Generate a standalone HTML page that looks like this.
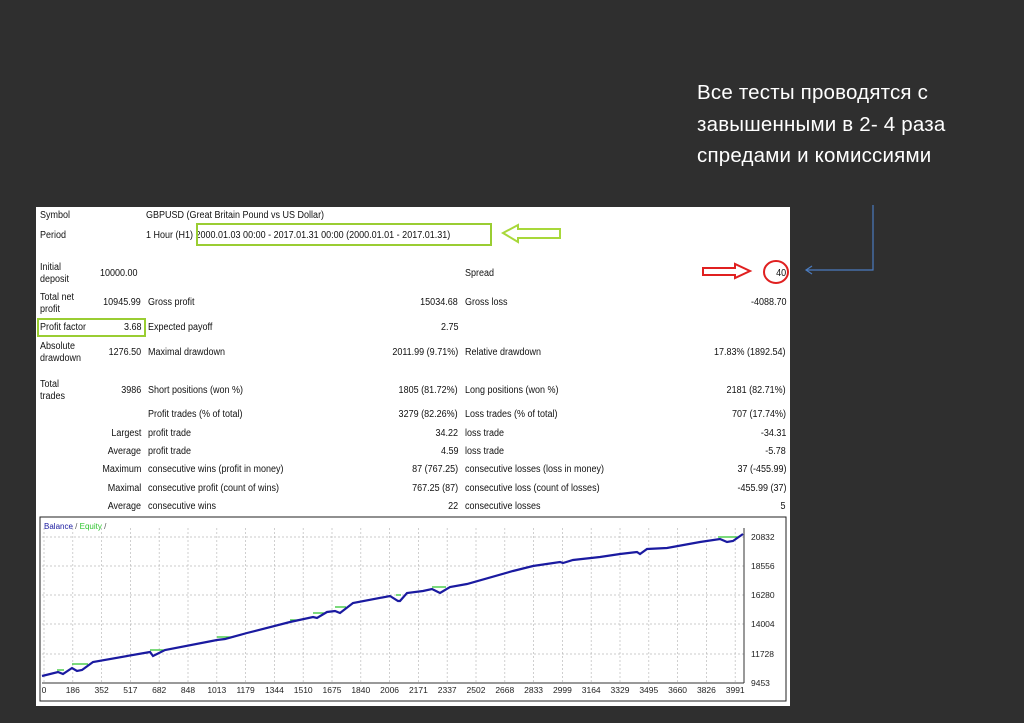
<!DOCTYPE html>
<html><head><meta charset="utf-8"><style>
body{margin:0;width:1024px;height:723px;background:#2f2f2f;position:relative;overflow:hidden;font-family:"Liberation Sans",sans-serif}
.title{position:absolute;left:697px;top:77px;color:#fff;font-size:20.5px;line-height:31.5px;letter-spacing:0.2px}
.panel{position:absolute;left:36px;top:207px;width:754px;height:499px;background:#fff}
.t{position:absolute;font-size:10px;color:#111;white-space:nowrap;line-height:11px;transform:scaleX(0.9);transform-origin:left center}
.r{transform-origin:right center;text-align:right}
</style></head><body>
<div class="title">Все тесты проводятся с<br>завышенными в 2- 4 раза<br>спредами и комиссиями</div>
<div class="panel"></div>
<div id="txt"></div>
<svg width="1024" height="723" style="position:absolute;left:0;top:0">
<rect x="197" y="224" width="294" height="21" fill="none" stroke="#9acd32" stroke-width="2"/>
<rect x="38" y="319" width="107" height="17" fill="none" stroke="#9acd32" stroke-width="2"/>
<path d="M503 233 L518 225 L518 229 L560 229 L560 238 L518 238 L518 242 Z" fill="none" stroke="#a8d83a" stroke-width="2"/>
<path d="M703 268 L735 268 L735 264 L750 271 L735 278 L735 275 L703 275 Z" fill="none" stroke="#e02020" stroke-width="2"/>
<ellipse cx="776" cy="272" rx="12" ry="11" fill="none" stroke="#e02020" stroke-width="2"/>
<path d="M873 205 V270 H806" fill="none" stroke="#4a7bbf" stroke-width="1.2"/>
<path d="M812 266 L806 270 L812 274" fill="none" stroke="#4a7bbf" stroke-width="1.2"/>
<rect x="40" y="517" width="746" height="184" fill="#fff" stroke="#222" stroke-width="1"/>
<g id="grid" stroke="#bbb" stroke-dasharray="2,2" stroke-width="0.7"></g>
<line x1="42" y1="683" x2="744" y2="683" stroke="#333"/>
<line x1="744" y1="528" x2="744" y2="683" stroke="#333"/>
<g stroke="#2ec42e" stroke-width="1.3" fill="none">
<path d="M57 670H64M72 664H88M150 650H166M217 637H234M290 620H298M313 613H324M335 607H346M396 595H401M432 587H446M718 537H738"/>
</g>
<polyline fill="none" stroke="#1a1aa0" stroke-width="2.2" points="42,676 58,672 63,674 72,668 77,671 82,670 93,662 150,652 153,656 165,650 217,640 225,639 247,633 290,622 313,617 317,618 327,612 335,611 340,613 353,603 390,596 398,601 400,601 407,593 423,591 432,589 440,593 450,587 467,584 513,571 533,566 560,562 563,563 573,560 600,557 620,554 637,552 640,554 647,549 667,548 700,542 720,539 727,542 733,541 743,534"/>
<text x="44" y="529" font-size="8" fill="#1a1aa0" font-family="Liberation Sans">Balance <tspan fill="#555">/</tspan> <tspan fill="#2ec42e">Equity</tspan> <tspan fill="#555">/</tspan></text>
<g id="lab" font-size="8.5" fill="#222" font-family="Liberation Sans"></g>
</svg>
<script>
var rows=[
[40,215,"Symbol"],[146,215,"GBPUSD (Great Britain Pound vs US Dollar)"],
[40,235,"Period"],[146,235,"1 Hour (H1) 2000.01.03 00:00 - 2017.01.31 00:00 (2000.01.01 - 2017.01.31)"],
[40,267,"Initial"],[40,279,"deposit"],[100,273,"10000.00"],[465,273,"Spread"],
[40,297,"Total net"],[40,309,"profit"],[148,302,"Gross profit"],[465,302,"Gross loss"],
[40,327,"Profit factor"],[148,327,"Expected payoff"],
[40,346,"Absolute"],[40,358,"drawdown"],[148,352,"Maximal drawdown"],[465,352,"Relative drawdown"],
[40,384,"Total"],[40,396,"trades"],[148,390,"Short positions (won %)"],[465,390,"Long positions (won %)"],
[148,414,"Profit trades (% of total)"],[465,414,"Loss trades (% of total)"],
[148,433,"profit trade"],[465,433,"loss trade"],[148,451,"profit trade"],[465,451,"loss trade"],
[148,469,"consecutive wins (profit in money)"],[465,469,"consecutive losses (loss in money)"],
[148,488,"consecutive profit (count of wins)"],[465,488,"consecutive loss (count of losses)"],
[148,506,"consecutive wins"],[465,506,"consecutive losses"]];
var rr=[[141,302,"10945.99"],[141,327,"3.68"],[141,352,"1276.50"],[141,390,"3986"],[141,433,"Largest"],[141,451,"Average"],[141,469,"Maximum"],[141,488,"Maximal"],[141,506,"Average"],
[458,302,"15034.68"],[458,327,"2.75"],[458,352,"2011.99 (9.71%)"],[458,390,"1805 (81.72%)"],[458,414,"3279 (82.26%)"],[458,433,"34.22"],[458,451,"4.59"],[458,469,"87 (767.25)"],[458,488,"767.25 (87)"],[458,506,"22"],
[786,273,"40"],[786,302,"-4088.70"],[786,352,"17.83% (1892.54)"],[786,390,"2181 (82.71%)"],[786,414,"707 (17.74%)"],[786,433,"-34.31"],[786,451,"-5.78"],[786,469,"37 (-455.99)"],[786,488,"-455.99 (37)"],[786,506,"5"]];
var h="";rows.forEach(function(a){h+='<div class="t" style="left:'+a[0]+'px;top:'+(a[1]-5)+'px">'+a[2]+'</div>'});
rr.forEach(function(a){h+='<div class="t r" style="right:'+(1024-a[0])+'px;top:'+(a[1]-5)+'px">'+a[2]+'</div>'});
document.getElementById('txt').innerHTML=h;
var g="",l="";var ys=[537,566,595,624,654],yl=["20832","18556","16280","14004","11728"];
ys.forEach(function(y,i){g+='<line x1="42" y1="'+y+'" x2="744" y2="'+y+'"/>';l+='<text x="751" y="'+(y+3)+'">'+yl[i]+'</text>'});
l+='<text x="751" y="686">9453</text>';
var xl=["0","186","352","517","682","848","1013","1179","1344","1510","1675","1840","2006","2171","2337","2502","2668","2833","2999","3164","3329","3495","3660","3826","3991"];
xl.forEach(function(t,i){var x=44+i*28.8;g+='<line x1="'+x+'" y1="528" x2="'+x+'" y2="683"/>';l+='<text x="'+x+'" y="693" text-anchor="middle">'+t+'</text>'});
document.getElementById('grid').innerHTML=g;document.getElementById('lab').innerHTML=l;
</script>
</body></html>
